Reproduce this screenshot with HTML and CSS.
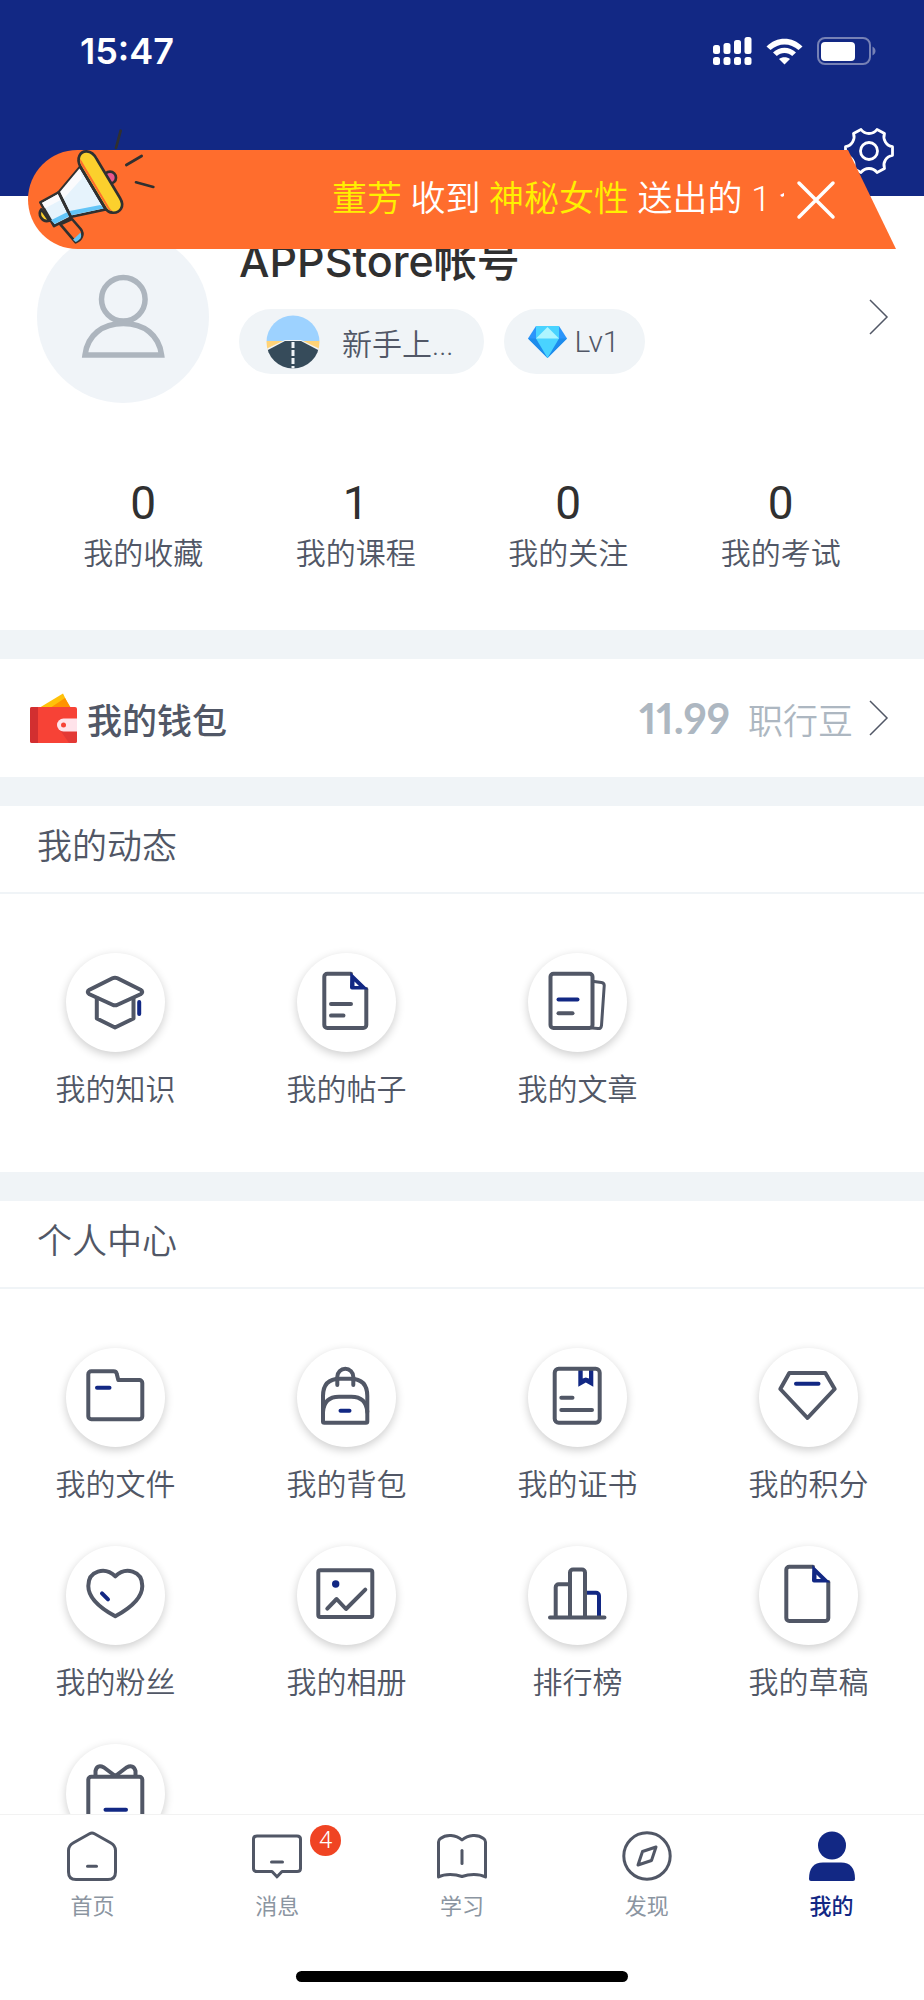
FILE: index.html
```html
<!DOCTYPE html>
<html lang="zh-CN">
<head>
<meta charset="utf-8">
<meta name="viewport" content="width=device-width, initial-scale=1">
<title>我的</title>
<link rel="stylesheet" href="styles.css">
</head>
<body>
<div class="app">
  <header class="header">
    <div class="status">
      <time class="status-time">15:47</time>
      <div class="status-icons">
        <svg width="39" height="28" viewBox="0 0 39 28" fill="#fff" aria-hidden="true">
          <rect x="0" y="8" width="7" height="9" rx="2.500"/><rect x="10.500" y="6" width="7" height="11" rx="2.500"/><rect x="21" y="3" width="7" height="14" rx="2.500"/><rect x="31.500" y="0" width="7" height="17" rx="2.500"/>
          <rect x="0" y="20" width="7" height="8" rx="2.500"/><rect x="10.500" y="20" width="7" height="8" rx="2.500"/><rect x="21" y="20" width="7" height="8" rx="2.500"/><rect x="31.500" y="20" width="7" height="8" rx="2.500"/>
        </svg>
        <svg width="37" height="27" viewBox="0 0 37 27" fill="#fff" aria-hidden="true">
          <path d="M0.500 8.500C10.500-2 26.500-2 36.500 8.500L32.500 12C24.500 4.500 12.500 4.500 4.500 12Z"/>
          <path d="M7 14.500C13.500 8 23.500 8 30 14.500L26.200 18C22 14 15 14 10.800 18Z"/>
          <path d="M13 21C16 18.500 21 18.500 24 21L18.500 26.500Z"/>
        </svg>
        <svg width="59" height="28" viewBox="0 0 59 28" fill="none" aria-hidden="true">
          <rect x="1" y="1" width="52" height="26" rx="7" stroke="#7681b5" stroke-width="2"/>
          <rect x="4" y="5" width="34" height="19" rx="4" fill="#fff"/>
          <path d="M55.500 9.500c4 2 4 7 0 9z" fill="#7681b5"/>
        </svg>
      </div>
    </div>
    <div class="toolbar">
      <button class="icon-button" type="button" aria-label="设置">
        <svg width="50" height="50" viewBox="-25 -25 50 50" fill="none" stroke="#fff" stroke-width="2.800" stroke-linejoin="round" aria-hidden="true">
          <path d="M-15.500-17.500L-8-21.500A10 10 0 0 0 8-21.500L15.500-17.500A10 10 0 0 0 23.500-4.300V4.300A10 10 0 0 0 15.500 17.500L8 21.500A10 10 0 0 0-8 21.500L-15.500 17.500A10 10 0 0 0-23.500 4.300V-4.300A10 10 0 0 0-15.500-17.500Z"/>
          <circle r="8.500"/>
        </svg>
      </button>
    </div>
  </header>

  <aside class="notice">
    <svg class="megaphone" width="125" height="125" viewBox="105 372 375 375" fill="none" stroke="#303030" stroke-width="8" stroke-linejoin="round" stroke-linecap="round" aria-hidden="true">
      <path d="M362 392L348 444M425 468L379 495M408 547L460 561"/>
      <circle cx="330" cy="533" r="18" fill="#e8568c"/>
      <path d="M124 628C112 644 126 668 148 662Z" fill="#fbd02d"/>
      <path d="M181 673L216 657L242 687C254 703 244 720 227 727Z" fill="#ff6d2d"/>
      <path d="M219 719L241 698C248 710 240 720 227 726Z" fill="#64c5f7" stroke="none"/>
      <path d="M241 500L176 577L211 651L317 628Z" fill="#e6f3fc"/>
      <path d="M239 505L179 577L190 597L246 535Z" fill="#fbfbfd" stroke="none"/>
      <path d="M205 634L301 615L313 625L214 646Z" fill="#64c5f7" stroke="none"/>
      <path d="M121 607L176 577L213 652L162 678Z" fill="#e6f3fc"/>
      <path d="M126 609L174 582L182 600L135 625Z" fill="#fbfbfd" stroke="none"/>
      <path d="M153 661L202 636L208 649L164 672Z" fill="#64c5f7" stroke="none"/>
      <path d="M241 500C228 474 241 453 260 454C274 455 283 463 290 477L360 594C375 619 361 640 337 638C326 637 321 632 317 626Z" fill="#fbd02d"/>
      <path d="M240 476C240 487 242 493 248 502L320 620C325 628 330 633 338 633C329 626 326 620 321 611L252 495C247 486 244 480 240 476Z" fill="#ff6d2d" stroke="none"/>
      <path d="M241 500L317 628M176 577L213 652"/>
    </svg>
    <p class="notice-text"><b class="notice-name">董芳</b> 收到 <b class="notice-name">神秘女性</b> 送出的 1 个</p>
    <button class="icon-button" type="button" aria-label="关闭">
      <svg width="40" height="40" viewBox="0 0 40 40" stroke="#fff" stroke-width="3.500" stroke-linecap="round" aria-hidden="true"><path d="M3 3L37 37M37 3L3 37"/></svg>
    </button>
  </aside>

  <main class="content">
    <section class="card">
      <a class="profile" href="#profile">
        <svg class="avatar" viewBox="0 0 172 172" fill="none" aria-hidden="true">
          <circle cx="86" cy="86" r="86" fill="#f0f4f8"/>
          <g stroke="#adb5be" stroke-width="5.500"><circle cx="86.300" cy="68.300" r="21.800"/><path d="M48 124H124.600C122 104 107 92.500 86.300 92.500C65.500 92.500 50.500 104 48 124Z"/></g>
        </svg>
        <div class="profile-info">
          <h1 class="profile-name">APPStore帐号</h1>
          <div class="pills">
            <span class="pill pill-title">
              <svg width="54" height="54" viewBox="0 0 54 54" aria-hidden="true">
                <defs><clipPath id="road"><circle cx="27" cy="27" r="26.500"/></clipPath></defs>
                <g clip-path="url(#road)">
                  <path fill="#9dd2ff" d="M0 0H54V26H0Z"/><path fill="#ffd378" d="M0 26H54V35H0Z"/>
                  <path fill="#f0f4f7" d="M0 34L19 25H35L54 34V54H0Z"/>
                  <path fill="#364b5a" d="M0 36L19 26H35L54 36V54H0Z"/>
                  <path stroke="#f0f4f7" stroke-width="3" stroke-dasharray="6 2" d="M27 27V54"/>
                </g>
              </svg>
              新手上...
            </span>
            <span class="pill pill-level">
              <svg width="39" height="32" viewBox="0 0 39 32" aria-hidden="true">
                <path fill="#2b95fb" d="M8 0H31L39 12.500L19.500 32L0 12.500Z"/>
                <path fill="#1d8cec" d="M0 12.500H39L19.500 32Z"/>
                <path fill="#49d3ff" d="M8 0H31V12.500L19.500 32L8 12.500Z"/>
                <path fill="#aef5ff" d="M19.500 1L31 12.500H8Z"/>
              </svg>
              Lv1
            </span>
          </div>
        </div>
        <svg class="chevron" viewBox="0 0 20 36" aria-hidden="true"><path d="M1 1L18 18L1 35"/></svg>
      </a>
      <nav class="stats" aria-label="统计">
        <a class="stat" href="#favorites"><strong class="stat-value">0</strong><span>我的收藏</span></a>
        <a class="stat" href="#courses"><strong class="stat-value">1</strong><span>我的课程</span></a>
        <a class="stat" href="#follows"><strong class="stat-value">0</strong><span>我的关注</span></a>
        <a class="stat" href="#exams"><strong class="stat-value">0</strong><span>我的考试</span></a>
      </nav>
    </section>

    <a class="card wallet" href="#wallet">
      <svg width="48" height="50" viewBox="0 0 48 50" aria-hidden="true">
        <path fill="#ffc10a" d="M33 0.500L9 15H40Z"/><path fill="#ff9200" d="M35 5L20 15H41Z"/>
        <rect y="14" width="47" height="36" rx="2" fill="#f74236"/>
        <path fill="#d22f30" d="M2 14H8V50H2a2 2 0 0 1-2-2V16a2 2 0 0 1 2-2Z"/>
        <path fill="#e33935" d="M30 37H47V48a2 2 0 0 1-2 2H39Z"/>
        <path fill="#ffe3ea" d="M47 25.500H33.500a6.500 6.500 0 0 0 0 13H47Z"/><circle cx="33.500" cy="32" r="2.500" fill="#f74236"/>
      </svg>
      <h2 class="wallet-title">我的钱包</h2>
      <span class="wallet-value">11.99</span>
      <span class="wallet-unit">职行豆</span>
      <svg class="chevron" viewBox="0 0 20 36" aria-hidden="true"><path d="M1 1L18 18L1 35"/></svg>
    </a>

    <section class="card">
      <h2 class="card-title">我的动态</h2>
      <div class="grid">
        <a class="entry" href="#knowledge">
          <svg class="entry-icon" viewBox="0 0 99 99" aria-hidden="true"><path d="M30.800 45V65.500L49 74.500L67.500 65.500V45"/><path d="M46.500 25.300Q49 24 51.500 25.300L74.500 36.700Q78 39 74.500 41.300L51.500 51.700Q49 53 46.500 51.700L23.500 41.300Q20 39 23.500 36.700Z"/><path class="accent" d="M73.200 49V61"/></svg>
          <span>我的知识</span>
        </a>
        <a class="entry" href="#posts">
          <svg class="entry-icon" viewBox="0 0 99 99" aria-hidden="true"><path d="M54 20.700H30.300a3 3 0 0 0-3 3V72a3 3 0 0 0 3 3H66.300a3 3 0 0 0 3-3V36"/><path class="accent-fill" d="M53.300 19L71.300 36.500H55a2 2 0 0 1-2-2ZM57.500 28.500V33H62Z"/><path d="M34 51H54M34 62.500H46.500"/></svg>
          <span>我的帖子</span>
        </a>
        <a class="entry" href="#articles">
          <svg class="entry-icon" viewBox="0 0 99 99" aria-hidden="true"><rect x="22.500" y="20.700" width="42" height="54.300" rx="3"/><path class="thin" d="M66 28.500L73.500 29.500Q76.500 30 76.200 33L73.500 72.500Q73 76 70 75.500L64 75"/><path class="accent" d="M30.500 46.500H49.500"/><path d="M30.500 60.300H44.500"/></svg>
          <span>我的文章</span>
        </a>
      </div>
    </section>

    <section class="card">
      <h2 class="card-title">个人中心</h2>
      <div class="grid">
        <a class="entry" href="#files">
          <svg class="entry-icon" viewBox="0 0 99 99" aria-hidden="true"><path d="M22.300 26.300a3 3 0 0 1 3-3H47.500Q50.300 23.300 50.800 26L52.300 32H73.300a3 3 0 0 1 3 3V68.300a3 3 0 0 1-3 3H25.300a3 3 0 0 1-3-3Z"/><path class="accent" d="M31 39.700H43.500"/></svg>
          <span>我的文件</span>
        </a>
        <a class="entry" href="#bag">
          <svg class="entry-icon" viewBox="0 0 99 99" aria-hidden="true"><path d="M26 48Q26 30.700 43 30.700H53.300Q70.300 30.700 70.300 48V73.500Q70.300 74.700 69 74.700H27.300Q26 74.700 26 73.500Z"/><path d="M40.300 37V28.700a8 8 0 0 1 16 0V37M26 64Q27 48.700 42 48.700H54.300Q69.300 48.700 70.300 64"/><path class="accent" d="M43.500 62.700H52.500"/></svg>
          <span>我的背包</span>
        </a>
        <a class="entry" href="#certificates">
          <svg class="entry-icon" viewBox="0 0 99 99" aria-hidden="true"><path class="accent-fill" d="M50.300 20H65.300V38.700L57.800 34.500L50.300 38.700ZM54.700 22V30.500L57.800 29.500L61 30.500V22Z"/><rect x="26.700" y="20.700" width="45" height="54" rx="4"/><path d="M33.300 49.700H44.500M33.300 62H64"/></svg>
          <span>我的证书</span>
        </a>
        <a class="entry" href="#points">
          <svg class="entry-icon" viewBox="0 0 99 99" aria-hidden="true"><path d="M30.300 25H66.300L75.700 41L48.500 70L21.300 41Z"/><path class="accent" d="M37 35.700H59.500"/></svg>
          <span>我的积分</span>
        </a>
        <a class="entry" href="#fans">
          <svg class="entry-icon" viewBox="0 0 99 99" aria-hidden="true"><path d="M49.300 30.300C39 20.500 22.300 24.500 22.300 40C22.300 52 33 61.500 49.300 70.300C65.500 61.500 76.300 52 76.300 40C76.300 24.500 59.500 20.500 49.300 30.300Z"/><path class="accent" d="M36 47.300L42 53.300"/></svg>
          <span>我的粉丝</span>
        </a>
        <a class="entry" href="#album">
          <svg class="entry-icon" viewBox="0 0 99 99" aria-hidden="true"><rect x="21.300" y="24.300" width="54" height="46.700" rx="2"/><circle class="accent-fill" cx="38.700" cy="38" r="3.700"/><path d="M30.300 62.600L39.600 53L49 63L68.300 43.600"/></svg>
          <span>我的相册</span>
        </a>
        <a class="entry" href="#ranking">
          <svg class="entry-icon" viewBox="0 0 99 99" aria-hidden="true"><path class="accent" d="M57 46.700H68a3 3 0 0 1 3 3V71"/><path d="M22 71.600H76.500M27.700 71V41.300a3 3 0 0 1 3-3H42M42 71V26.600a3 3 0 0 1 3-3H54a3 3 0 0 1 3 3V71"/></svg>
          <span>排行榜</span>
        </a>
        <a class="entry" href="#drafts">
          <svg class="entry-icon" viewBox="0 0 99 99" aria-hidden="true"><path d="M54 20.700H30.300a3 3 0 0 0-3 3V72a3 3 0 0 0 3 3H66.300a3 3 0 0 0 3-3V36"/><path class="accent-fill" d="M53.300 19L71.300 36.500H55a2 2 0 0 1-2-2ZM57.500 28.500V33H62Z"/></svg>
          <span>我的草稿</span>
        </a>
        <a class="entry" href="#gifts" aria-label="礼物">
          <svg class="entry-icon" viewBox="0 0 99 99" aria-hidden="true"><rect x="22.300" y="32.700" width="54" height="46" rx="3"/><path d="M29.500 32V27Q31 20 38 23.500L49.300 32L60.500 23.500Q67.500 20 69.500 27V32"/><path class="accent" d="M39.500 65.700H60"/></svg>
        </a>
      </div>
    </section>
  </main>

  <footer class="footer">
    <nav class="tabs" aria-label="主导航">
      <a class="tab" href="#home">
        <svg class="tab-icon" viewBox="0 0 50 50" aria-hidden="true"><path d="M22.500 2.800Q25 1.400 27.500 2.800L43.500 11.700Q48.500 14.500 48.500 19.500V41Q48.500 48.500 41 48.500H9Q1.500 48.500 1.500 41V19.500Q1.500 14.500 6.500 11.700Z"/><path class="heavy" d="M20.500 35.300H29.500"/></svg>
        <span>首页</span>
      </a>
      <a class="tab" href="#messages">
        <span class="tab-figure">
          <svg class="tab-icon" viewBox="0 0 50 50" aria-hidden="true"><path d="M5 5H45Q48.500 5 48.500 8V37.500Q48.500 40.500 45 40.500H30L25 45.800L20 40.500H5Q1.500 40.500 1.500 37.500V8Q1.500 5 5 5Z"/><path class="heavy" d="M19.500 31H30.500"/></svg>
          <span class="badge">4</span>
        </span>
        <span>消息</span>
      </a>
      <a class="tab" href="#study">
        <svg class="tab-icon" viewBox="0 0 50 50" aria-hidden="true"><path d="M25 9C19 3.500 9 3 3.500 7.500Q1.500 8.800 1.500 11V46C8 42.500 18 43 25 45.500C32 43 42 42.500 48.500 46V11Q48.500 8.800 46.500 7.500C41 3 31 3.500 25 9Z"/><path d="M25 19.500V32.500"/></svg>
        <span>学习</span>
      </a>
      <a class="tab" href="#discover">
        <svg class="tab-icon" viewBox="0 0 50 50" aria-hidden="true"><circle cx="25" cy="25" r="23.200"/><path d="M34 16L20.500 20.500L16 34L29.500 29.500Z"/></svg>
        <span>发现</span>
      </a>
      <a class="tab tab-active" href="#me" aria-current="page">
        <svg class="tab-icon" viewBox="0 0 50 50" aria-hidden="true"><circle cx="25" cy="14.500" r="14"/><path d="M16 31.500H34Q48 31.500 48 48Q48 50 46 50H4Q2 50 2 48Q2 31.500 16 31.500Z"/></svg>
        <span>我的</span>
      </a>
    </nav>
    <div class="home-indicator"></div>
  </footer>
</div>
</body>
</html>
```

FILE: styles.css
```css
:root {
  --navy: #122884;
  --ink: #515766;
  --dark: #303030;
  --muted: #adb7c1;
  --surface: #f0f4f7;
  --orange: #ff6d2d;
}

* {
  box-sizing: border-box;
}

body {
  margin: 0;
  font-family: Roboto, "Noto Sans CJK SC", sans-serif;
  font-weight: 350;
  color: var(--ink);
  background: var(--surface);
}

h1,
h2,
p {
  margin: 0;
}

a {
  color: inherit;
  text-decoration: none;
}

svg {
  display: block;
  flex: none;
}

.app {
  position: relative;
  display: flex;
  flex-direction: column;
  height: 100vh;
}

.header {
  flex: none;
  color: #fff;
  background: var(--navy);
}

.status {
  display: flex;
  align-items: center;
  justify-content: space-between;
  height: 102px;
  padding: 0 48px 0 80px;
}

.status-time {
  font-family: Inter, sans-serif;
  font-size: 36px;
  font-weight: 600;
}

.status-icons {
  display: flex;
  align-items: center;
  gap: 14px;
}

.toolbar {
  display: flex;
  align-items: center;
  justify-content: flex-end;
  height: 94px;
  padding: 4px 30px 0;
}

.icon-button {
  position: relative;
  flex: none;
  padding: 0;
  border: 0;
  background: none;
  cursor: pointer;
}

/* Announcement strip floating over the header and the profile */
.notice {
  position: absolute;
  top: 150px;
  left: 28px;
  right: 28px;
  z-index: 2;
  display: flex;
  align-items: center;
  height: 99px;
  padding: 0 60px 0 7px;
}

.notice::before {
  content: "";
  position: absolute;
  inset: 0;
  border-radius: 50px 0 0 50px;
  background: var(--orange);
  clip-path: polygon(0 0, calc(100% - 48px) 0, 100% 100%, 0 100%);
}

.megaphone {
  position: relative;
  align-self: flex-end;
}

.notice-text {
  position: relative;
  flex: 1;
  min-width: 0;
  margin: 0 12px 0 172px;
  overflow: hidden;
  white-space: nowrap;
  font-size: 35px;
  line-height: 50px;
  color: #fff;
}

.notice-name {
  font-weight: inherit;
  color: #fff000;
}

.content {
  flex: 1;
  min-height: 0;
  display: flex;
  flex-direction: column;
  gap: 29px;
  overflow-y: auto;
  scrollbar-width: none;
}

.card {
  flex: none;
  background: #fff;
}

.profile {
  display: flex;
  align-items: center;
  padding: 35px 35px 0 37px;
}

.avatar {
  width: 172px;
  height: 172px;
}

.profile-info {
  flex: 1;
  align-self: flex-start;
  margin-left: 30px;
}

.profile-name {
  font-family: Inter, "Noto Sans CJK SC", sans-serif;
  font-size: 43px;
  font-weight: 500;
  line-height: 60px;
  color: var(--dark);
}

.pills {
  display: flex;
  gap: 20px;
  margin-top: 18px;
}

.pill {
  display: flex;
  align-items: center;
  height: 65px;
  border-radius: 33px;
  font-size: 30px;
  background: var(--surface);
}

.pill-title {
  gap: 22px;
  padding: 0 30px 0 27px;
}

.pill-level {
  gap: 8px;
  padding: 0 25px 0 24px;
}

.chevron {
  width: 20px;
  height: 36px;
  fill: none;
  stroke: var(--ink);
  stroke-width: 1.5;
}

.stats {
  display: grid;
  grid-template-columns: repeat(4, 1fr);
  padding: 76px 37px 56px;
}

.stat {
  display: flex;
  flex-direction: column;
  align-items: center;
  gap: 7px;
  font-size: 30px;
  line-height: 40px;
}

.stat-value {
  font-size: 46px;
  font-weight: 400;
  line-height: 48px;
  color: var(--dark);
}

.wallet {
  display: flex;
  align-items: center;
  height: 118px;
  padding: 0 35px 0 30px;
}

.wallet-title {
  margin: 0 auto 0 9px;
  font-size: 35px;
  font-weight: 500;
}

.wallet-value {
  font-family: Lato, sans-serif;
  font-size: 42px;
  font-weight: 700;
  font-variant-numeric: proportional-nums;
  color: var(--muted);
}

.wallet-unit {
  margin: 0 16px 0 18px;
  font-size: 35px;
  color: var(--muted);
}

.card-title {
  padding: 17px 37px 19px;
  border-bottom: 2px solid var(--surface);
  font-size: 35px;
  font-weight: inherit;
  line-height: 50px;
}

.grid {
  display: grid;
  grid-template-columns: repeat(4, 1fr);
  row-gap: 41px;
  padding: 59px 0 62px;
}

.entry {
  display: flex;
  flex-direction: column;
  align-items: center;
  gap: 18px;
  font-size: 30px;
  line-height: 40px;
}

.entry-icon {
  width: 99px;
  height: 99px;
  border-radius: 50%;
  background: #fff;
  box-shadow: 0 3px 10px rgba(0, 0, 0, 0.2);
  fill: none;
  stroke: var(--ink);
  stroke-width: 4;
  stroke-linecap: round;
  stroke-linejoin: round;
}

.entry-icon .accent {
  stroke: var(--navy);
}

.entry-icon .accent-fill {
  stroke: none;
  fill: var(--navy);
  fill-rule: evenodd;
}

.entry-icon .thin {
  stroke-width: 3;
}

.footer {
  flex: none;
  padding-bottom: 18px;
  border-top: 1px solid #f2f2f2;
  background: #fff;
}

.tabs {
  display: grid;
  grid-template-columns: repeat(5, 1fr);
  padding: 16px 0 49px;
}

.tab {
  display: flex;
  flex-direction: column;
  align-items: center;
  gap: 11px;
  font-size: 22px;
  font-weight: 400;
  line-height: 30px;
  color: #8b95a1;
}

.tab-figure {
  position: relative;
}

.tab-icon {
  width: 50px;
  height: 50px;
  fill: none;
  stroke: var(--ink);
  stroke-width: 3;
  stroke-linecap: round;
  stroke-linejoin: round;
}

.tab-active {
  font-weight: 500;
  color: var(--navy);
}

.tab-active .tab-icon {
  fill: var(--navy);
  stroke: none;
}

.badge {
  position: absolute;
  top: -6px;
  left: 58px;
  min-width: 31px;
  height: 31px;
  border-radius: 16px;
  font-size: 24px;
  font-weight: 300;
  line-height: 31px;
  text-align: center;
  color: #fff;
  background: #f04423;
}

.home-indicator {
  width: 36%;
  height: 11px;
  margin: 0 auto;
  border-radius: 6px;
  background: #000;
}
```
